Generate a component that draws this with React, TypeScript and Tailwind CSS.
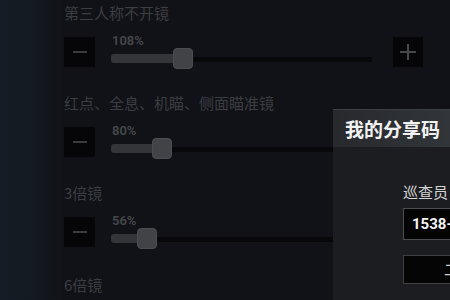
import React from "react";

const rows = [
  { label: "第三人称不开镜", pct: "108%", fill: "w-[72px]", thumb: "left-[62px]" },
  { label: "红点、全息、机瞄、侧面瞄准镜", pct: "80%", fill: "w-[51px]", thumb: "left-[41px]" },
  { label: "3倍镜", pct: "56%", fill: "w-[36px]", thumb: "left-[26px]" },
];

function Minus() {
  return (
    <div className="mt-[3px] flex h-[30px] w-[31px] shrink-0 items-center justify-center bg-[#060608]">
      <div className="h-[2px] w-[14px] bg-[#3a3b3e]" />
    </div>
  );
}

function Plus() {
  return (
    <div className="relative mt-[3px] flex h-[30px] w-[30px] shrink-0 items-center justify-center bg-[#060608]">
      <div className="h-[2px] w-[16px] bg-[#46474a]" />
      <div className="absolute h-[16px] w-[2px] bg-[#46474a]" />
    </div>
  );
}

export default function App() {
  return (
    <div
      className="relative flex h-[300px] w-[450px] overflow-hidden bg-[#111217]"
      style={{ fontFamily: '"Noto Sans CJK SC", "Noto Sans", sans-serif' }}
    >
      <div className="h-full w-[62px] shrink-0 bg-gradient-to-r from-[#151c25] via-[#131a21] to-[#111318]" />
      <div className="flex flex-col pl-[2px] pt-[4px]">
        {rows.map((r) => (
          <div key={r.label} className="flex flex-col pb-[24px]">
            <div className="h-[18px] whitespace-nowrap text-[15px] leading-[18px] text-[#3b3d42]">{r.label}</div>
            <div className="mt-[12px] flex h-[36px] items-start">
              <Minus />
              <div className="ml-[16px] flex w-[261px] flex-col">
                <div
                  className="h-[14px] pl-[1px] text-[13px] font-semibold leading-[14px] text-[#45474b]"
                  style={{ fontFamily: 'Roboto, "Noto Sans", sans-serif' }}
                >
                  {r.pct}
                </div>
                <div className="relative flex h-[22px] items-center">
                  <div className="h-[5px] w-full bg-[#08080a]" />
                  <div className={`absolute left-0 top-[6px] h-[9px] rounded-l-[3px] bg-[#343538] ${r.fill}`} />
                  <div className={`absolute top-[0px] h-[21px] w-[20px] rounded-[4px] border border-[#4c4d50] bg-[#424346] ${r.thumb}`} />
                </div>
              </div>
              <div className="ml-[21px]">
                <Plus />
              </div>
            </div>
          </div>
        ))}
        <div className="mt-[2px] h-[18px] whitespace-nowrap text-[15px] leading-[18px] text-[#3b3d42]">6倍镜</div>
      </div>

      <div className="absolute left-[333px] top-[109px] flex h-[191px] w-[200px] flex-col bg-[#1c1d21]">
        <div className="flex h-[38px] items-center border-t border-[#3c3f43] bg-gradient-to-r from-[#27292d] via-[#303337] to-[#3d4044] pl-[12px]">
          <span className="whitespace-nowrap text-[19px] font-bold leading-none text-[#f2f2f2]">我的分享码</span>
        </div>
        <div className="flex flex-col pl-[70px] pt-[35px]">
          <div className="h-[20px] whitespace-nowrap text-[15px] leading-[20px] text-[#d6d6d8]">巡查员</div>
          <div className="mt-[6px] flex h-[32px] w-[160px] items-center border border-[#4c4d51] bg-[#040405] pl-[8px]">
            <span
              className="whitespace-nowrap text-[15px] font-bold text-[#f4f4f4]"
              style={{ fontFamily: 'Roboto, "Noto Sans", sans-serif' }}
            >
              1538-2946-7701
            </span>
          </div>
          <div className="mt-[15px] flex h-[29px] w-[160px] items-center border border-[#3e3f43] bg-[#050506] pl-[40px]">
            <span className="whitespace-nowrap text-[15px] text-[#cfcfd1]">二维码分享</span>
          </div>
        </div>
      </div>
    </div>
  );
}
